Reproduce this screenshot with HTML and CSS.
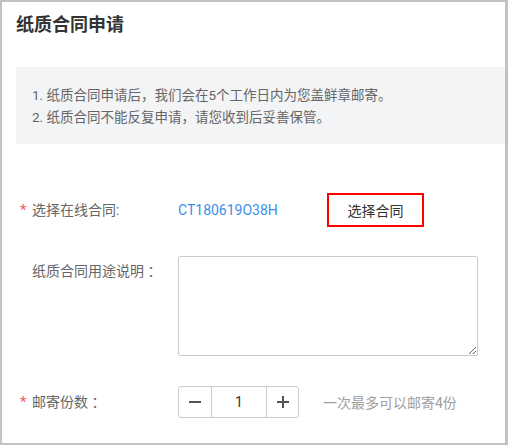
FILE: index.html
```html
<!DOCTYPE html>
<html lang="zh-CN">
<head>
	<meta charset="UTF-8">
	<title>纸质合同申请</title>
	<link rel="stylesheet" href="styles.css">
</head>
<body>
	<div class="page">
		<h2 class="title">纸质合同申请</h2>
		<div class="notice">
			<p>1. 纸质合同申请后，我们会在5个工作日内为您盖鲜章邮寄。</p>
			<p>2. 纸质合同不能反复申请，请您收到后妥善保管。</p>
		</div>
		<div class="form">
			<div class="row row-contract">
				<label class="label"><span class="star">*</span>选择在线合同:</label>
				<span class="value">CT180619O38H</span>
				<button class="btn-pick">选择合同</button>
			</div>
			<div class="row row-usage">
				<label class="label"><span class="star"></span>纸质合同用途说明<span class="colon">：</span></label>
				<textarea class="usage"></textarea>
			</div>
			<div class="row row-count">
				<label class="label"><span class="star">*</span>邮寄份数<span class="colon">：</span></label>
				<div class="stepper">
					<span class="step minus">
						<svg width="12" height="12" viewBox="0 0 12 12"><path d="M0 6h12" stroke="#555" stroke-width="2"/></svg>
					</span>
					<input class="count" type="text" value="1">
					<span class="step plus">
						<svg width="12" height="12" viewBox="0 0 12 12"><path d="M0 6h12M6 0v12" stroke="#555" stroke-width="2"/></svg>
					</span>
				</div>
				<span class="hint">一次最多可以邮寄4份</span>
			</div>
		</div>
	</div>
</body>
</html>
```

FILE: styles.css
```css
* {
	padding: 0;
	margin: 0;
	box-sizing: border-box;
}
body {
	font-family: Roboto, "Noto Sans CJK SC", sans-serif;
	font-size: 14px;
	color: #666;
	background-color: #fff;
}
.page {
	width: 508px;
	height: 445px;
	padding-left: 14px;
	border-style: solid;
	border-color: #c2c2c2;
	border-width: 2px 3px 2px 2px;
	overflow: hidden;
}
.title {
	margin-top: 11px;
	font-size: 18px;
	line-height: 24px;
	font-weight: bold;
	color: #333;
}
.notice {
	margin-top: 30px;
	padding: 17px 0 16px 16px;
	background-color: #f3f4f6;
	font-size: 13.5px;
}
.notice p {
	line-height: 22px;
}
.form {
	margin-top: 49px;
}
.row {
	display: flex;
	align-items: center;
}
.row-usage {
	margin-top: 29px;
	align-items: flex-start;
}
.row-count {
	margin-top: 30px;
}
.label {
	display: flex;
	width: 162px;
	padding-left: 4px;
	line-height: 30px;
}
.star {
	width: 12px;
	color: #f25a5a;
	font-size: 15px;
}
.colon {
	font-family: "Noto Sans CJK JP", sans-serif;
}
.value {
	width: 149px;
	color: #3d8fe8;
	font-size: 14px;
}
.btn-pick {
	width: 97px;
	height: 34px;
	border: 2px solid #f00;
	background-color: #fff;
	font: 14px "Noto Sans CJK SC", sans-serif;
	color: #333;
}
.usage {
	width: 300px;
	height: 100px;
	border: 1px solid #ccc;
	border-radius: 2px;
	font: 13px "Noto Sans CJK SC", sans-serif;
}
.stepper {
	display: flex;
	height: 32px;
	border: 1px solid #ccc;
	border-radius: 3px;
}
.step {
	display: flex;
	align-items: center;
	justify-content: center;
	width: 32px;
}
.plus {
	width: 31px;
}
.count {
	width: 56px;
	border: none;
	border-left: 1px solid #ccc;
	border-right: 1px solid #ccc;
	text-align: center;
	font: 14px Roboto, sans-serif;
	color: #333;
	outline: none;
}
.hint {
	margin-left: 24px;
	color: #a0a0a0;
}
```
